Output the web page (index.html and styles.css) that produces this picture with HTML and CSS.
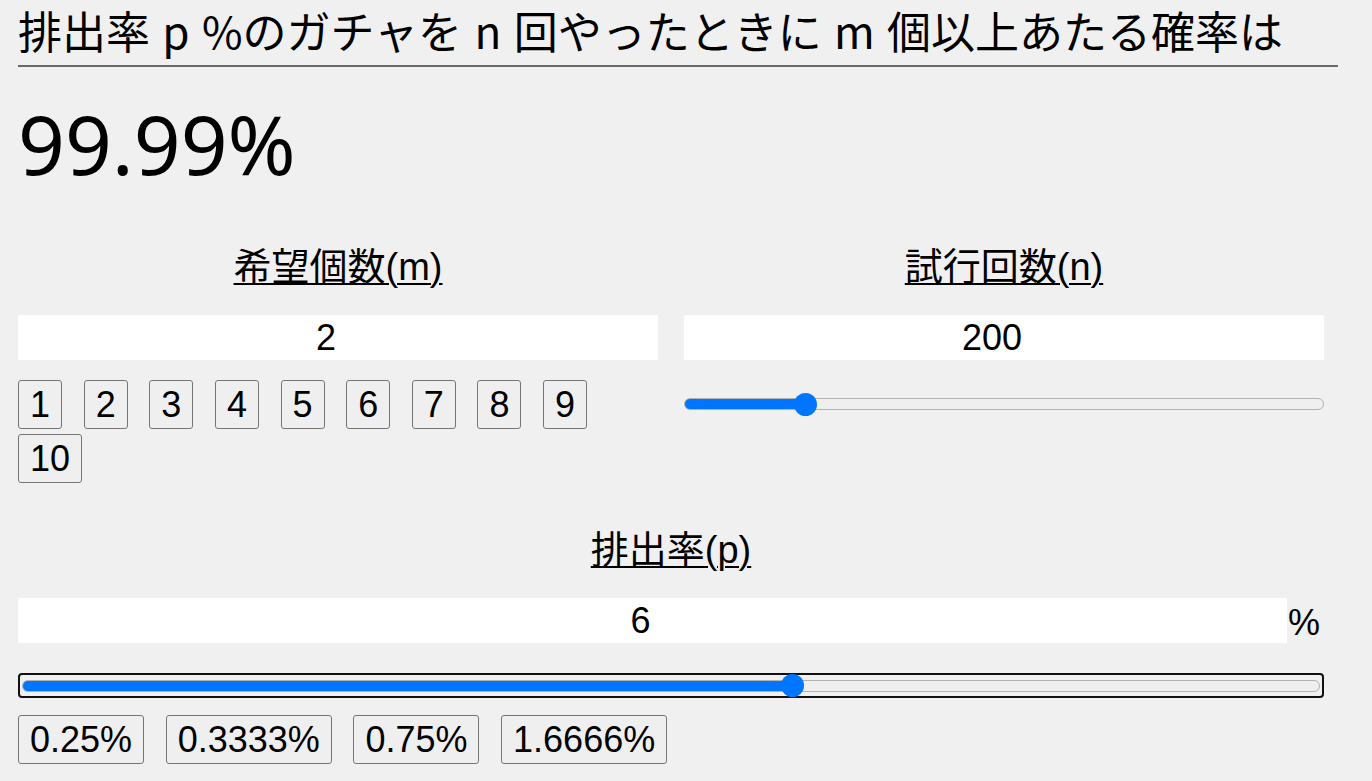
FILE: index.html
```html
<!DOCTYPE html>
<html lang="ja">
<head>
  <meta charset="UTF-8">
  <title>ガチャ確率計算</title>
  <link rel="stylesheet" href="styles.css">
</head>
<body>
  <main class="page">
    <h1 class="title">排出率 p %のガチャを n 回やったときに m 個以上あたる確率は</h1>
    <div class="result">99.99%</div>

    <div class="cols">
      <section class="field">
        <h2 class="field-label"><span>希望個数(m)</span></h2>
        <input class="num" type="text" value="2">
        <div class="choices">
          <button class="pick">1</button>
          <button class="pick">2</button>
          <button class="pick">3</button>
          <button class="pick">4</button>
          <button class="pick">5</button>
          <button class="pick">6</button>
          <button class="pick">7</button>
          <button class="pick">8</button>
          <button class="pick">9</button>
          <button class="pick">10</button>
        </div>
      </section>

      <section class="field">
        <h2 class="field-label"><span>試行回数(n)</span></h2>
        <input class="num" type="text" value="200">
        <input class="slider slider-n" type="range" min="0" max="1130" value="200" style="--fill: 18.9%">
      </section>
    </div>

    <section class="field field-wide">
      <h2 class="field-label"><span>排出率(p)</span></h2>
      <div class="with-unit">
        <input class="num" type="text" value="6">
        <span class="unit">%</span>
      </div>
      <div class="focus-ring">
        <input class="slider" type="range" min="0" max="10.07" step="0.01" value="6" style="--fill: 59.4%">
      </div>
      <div class="choices">
        <button class="pick">0.25%</button>
        <button class="pick">0.3333%</button>
        <button class="pick">0.75%</button>
        <button class="pick">1.6666%</button>
      </div>
    </section>
  </main>
</body>
</html>
```

FILE: styles.css
```css
html, body {
  margin: 0;
  padding: 0;
  background: #f0f0f0;
  color: #000;
  font-family: "Liberation Sans", "Noto Sans CJK JP", sans-serif;
}

.page {
  padding: 0 34px 20px 18px;
}

.title {
  margin: 0;
  padding-top: 0;
  padding-bottom: 5px;
  font-family: "Noto Sans CJK JP", sans-serif;
  font-size: 44px;
  font-weight: normal;
  line-height: 60px;
  word-spacing: 2.5px;
  border-bottom: 2px solid #6b6b6b;
  white-space: nowrap;
}

.result {
  margin-top: 36px;
  font-family: "Noto Sans", "Open Sans", sans-serif;
  font-size: 82px;
  line-height: 80px;
}

.cols {
  display: grid;
  grid-template-columns: 1fr 1fr;
  column-gap: 26px;
  margin-top: 62px;
  margin-right: 14px;
}

.field {
  display: flex;
  flex-direction: column;
}

.field-wide {
  margin-top: 45px;
  margin-right: 14px;
}

.field-label {
  margin: 0 0 26px;
  font-size: 38px;
  font-weight: normal;
  line-height: 44px;
  text-align: center;
}
.field-label span {
  text-decoration: underline;
  text-decoration-thickness: 2px;
  text-underline-offset: 3px;
}

.num {
  display: block;
  width: 100%;
  box-sizing: border-box;
  height: 45px;
  margin: 0;
  padding: 0 26px 0 2px;
  border: none;
  background: #fff;
  font-family: "Liberation Sans", sans-serif;
  font-size: 36px;
  text-align: center;
  color: #000;
}

.with-unit {
  display: flex;
  align-items: flex-end;
}
.with-unit .num {
  flex: 1;
  min-width: 0;
}
.unit {
  margin-left: 1px;
  width: 36px;
  font-size: 36px;
  line-height: 40px;
}

.choices {
  display: flex;
  flex-wrap: wrap;
  column-gap: 21.6px;
  row-gap: 5px;
  margin-top: 20px;
}

.pick {
  margin: 0;
  padding: 3px 11px;
  height: 49px;
  font-family: "Liberation Sans", sans-serif;
  font-size: 36px;
  line-height: 41px;
  color: #000;
  background: #efefef;
  border: 1px solid #767676;
  border-radius: 3px;
}

/* range: track + thumb drawn by hand, fill comes from --fill */
.slider {
  -webkit-appearance: none;
  appearance: none;
  display: block;
  width: 100%;
  height: 24px;
  margin: 0;
  padding: 0;
  background: transparent;
}
.slider::-webkit-slider-runnable-track {
  height: 12px;
  border-radius: 6px;
  box-sizing: border-box;
  border: 1px solid #b2b2b2;
  background: linear-gradient(to right, #0075ff var(--fill), #efefef var(--fill));
}
.slider::-webkit-slider-thumb {
  -webkit-appearance: none;
  width: 23px;
  height: 23px;
  margin-top: -6.5px;
  border-radius: 50%;
  background: #0075ff;
  border: none;
}
.slider-n {
  margin-top: 32px;
}

.focus-ring {
  margin-top: 30px;
  padding: 0 2px;
  border: 2px solid #111;
  border-radius: 4px;
  height: 21px;
  display: flex;
  align-items: center;
}
.focus-ring + .choices {
  margin-top: 17px;
}
```
